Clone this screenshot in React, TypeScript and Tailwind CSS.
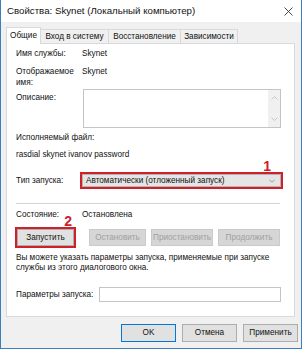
import React from "react";

function Chevron({ dir = "down", color = "#606060", w = 7 }: { dir?: "up" | "down"; color?: string; w?: number }) {
  return (
    <svg width={w} height="4" viewBox="0 0 7 4">
      <path
        d={dir === "down" ? "M0.5 0.5L3.5 3.5L6.5 0.5" : "M0.5 3.5L3.5 0.5L6.5 3.5"}
        fill="none"
        stroke={color}
        strokeWidth="0.9"
      />
    </svg>
  );
}

export default function App() {
  return (
    <div className="w-[302px] h-[349px] bg-[#f0f0f0] border-x border-b border-[#3b7fc0] flex flex-col font-['Liberation_Sans',Arial,sans-serif] text-[8.2px] leading-[10px] text-[#111] overflow-hidden">
      {/* title bar */}
      <div className="h-[22px] shrink-0 bg-white flex items-center justify-between pl-[6px] pr-[8px]">
        <span className="text-[9.7px] leading-[12px] text-[#111]">Свойства: Skynet (Локальный компьютер)</span>
        <svg width="9" height="9" viewBox="0 0 9 9">
          <path d="M0.5 0.5L8.5 8.5M8.5 0.5L0.5 8.5" stroke="#333" strokeWidth="0.9" />
        </svg>
      </div>

      {/* tabs */}
      <div className="relative z-10 mt-[5px] ml-[5px] h-[17px] flex items-end shrink-0">
        <div className="w-[35px] h-[17px] bg-white border border-b-0 border-[#d9d9d9] flex items-center justify-center pb-[1px]">
          Общие
        </div>
        <div className="w-[68px] h-[14px] mb-px border-t border-r border-[#d9d9d9] flex items-center justify-center">
          Вход в систему
        </div>
        <div className="w-[72px] h-[14px] mb-px border-t border-r border-[#d9d9d9] flex items-center justify-center">
          Восстановление
        </div>
        <div className="w-[57px] h-[14px] mb-px border-t border-r border-[#d9d9d9] flex items-center justify-center">
          Зависимости
        </div>
      </div>

      {/* panel */}
      <div className="-mt-px ml-[5px] w-[289px] h-[274px] shrink-0 bg-white border border-[#d9d9d9] pl-[9px] flex flex-col">
        <div className="mt-[5px] grid grid-cols-[66px_1fr]">
          <span>Имя службы:</span>
          <span>Skynet</span>
        </div>
        <div className="mt-[7px] grid grid-cols-[66px_1fr] leading-[11px]">
          <span>Отображаемое имя:</span>
          <span>Skynet</span>
        </div>
        <div className="mt-[1px] grid grid-cols-[66px_1fr]">
          <span className="pt-[4px]">Описание:</span>
          <div className="ml-[1px] w-[198px] h-[39px] border border-[#c4c4c4] flex justify-end">
            <div className="w-[12px] h-full bg-[#f0f0f0] flex flex-col items-center justify-between py-[6px]">
              <Chevron dir="up" color="#c2c2c2" />
              <Chevron dir="down" color="#c2c2c2" />
            </div>
          </div>
        </div>
        <div className="mt-[5px]">Исполняемый файл:</div>
        <div className="mt-[7px]">rasdial skynet ivanov password</div>
        <div className="mt-[12px] grid grid-cols-[66px_1fr] items-center">
          <span>Тип запуска:</span>
          <div className="relative -ml-[2px] w-[203px] h-[17px] border-2 border-[#d0202a]">
            <div className="w-full h-full bg-[#e5e5e5] border border-[#b5b5b5] flex items-center justify-between pl-[3px] pr-[5px]">
              <span>Автоматически (отложенный запуск)</span>
              <Chevron color="#8a8a8a" w={6} />
            </div>
            <span className="absolute right-[10px] -top-[15px] text-[14px] leading-[14px] font-bold text-[#d0202a]">1</span>
          </div>
        </div>
        <div className="mt-[14px] w-[264px] h-px bg-[#d4d4d4]" />
        <div className="mt-[6px] grid grid-cols-[66px_1fr]">
          <span>Состояние:</span>
          <span>Остановлена</span>
        </div>
        <div className="mt-[7px] flex items-center">
          <div className="relative -ml-[1px] border-2 border-[#d0202a] p-0">
            <div className="w-[57px] h-[17px] bg-[#e1e1e1] border border-[#adadad] flex items-center justify-center">
              Запустить
            </div>
            <span className="absolute right-[2px] -top-[15px] text-[14px] leading-[14px] font-bold text-[#d0202a]">2</span>
          </div>
          <div className="ml-[13px] w-[57px] h-[17px] bg-[#d6d6d6] border border-[#cacaca] text-[#a0a0a0] flex items-center justify-center">
            Остановить
          </div>
          <div className="ml-[5px] w-[62px] h-[17px] bg-[#d6d6d6] border border-[#cacaca] text-[#a0a0a0] flex items-center justify-center">
            Приостановить
          </div>
          <div className="ml-[5px] w-[62px] h-[17px] bg-[#d6d6d6] border border-[#cacaca] text-[#a0a0a0] flex items-center justify-center">
            Продолжить
          </div>
        </div>
        <div className="mt-[5px] w-[268px]">
          Вы можете указать параметры запуска, применяемые при запуске службы из этого диалогового окна.
        </div>
        <div className="mt-[14px] grid grid-cols-[83px_1fr] items-center">
          <span>Параметры запуска:</span>
          <div className="w-[182px] h-[15px] border border-[#c4c4c4] bg-white" />
        </div>
      </div>

      {/* bottom buttons */}
      <div className="mt-[7px] flex justify-end gap-[6px] pr-[3px]">
        <div className="w-[55px] h-[18px] bg-[#e1e1e1] border border-[#0078d7] flex items-center justify-center">OK</div>
        <div className="w-[55px] h-[18px] bg-[#e1e1e1] border border-[#adadad] flex items-center justify-center">Отмена</div>
        <div className="w-[55px] h-[18px] bg-[#e1e1e1] border border-[#adadad] flex items-center justify-center">Применить</div>
      </div>
    </div>
  );
}
